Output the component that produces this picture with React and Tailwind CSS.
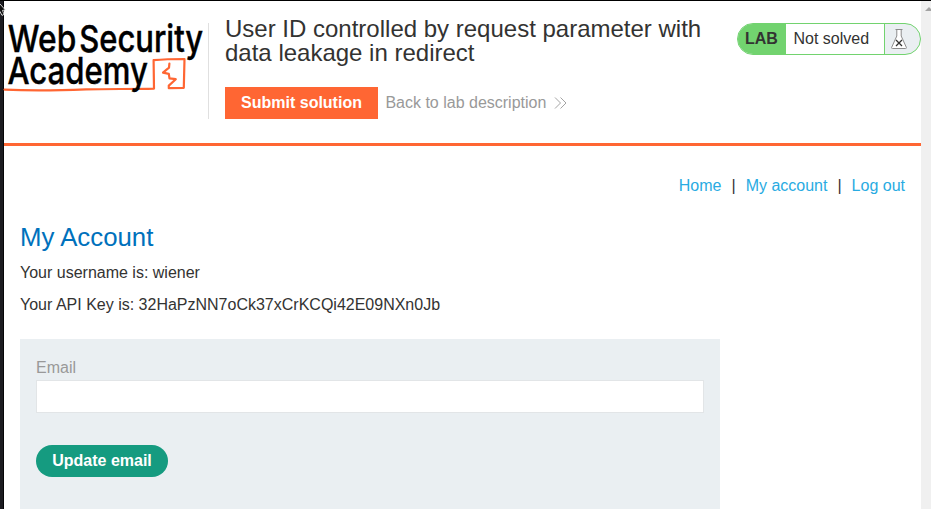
function Logo() {
  return (
    <svg width="204" height="96" viewBox="0 0 204 96" className="block shrink-0 overflow-visible" fontFamily="Inter, sans-serif" fontSize="37.2" fontWeight="500" stroke="#000" strokeWidth="0.4">
      <text x="3.8" y="50.7" textLength="68.5" lengthAdjust="spacingAndGlyphs">Web</text>
      <text x="75.2" y="50.7" textLength="124" lengthAdjust="spacingAndGlyphs">Security</text>
      <g fill="none" stroke="#ff6633" strokeWidth="2.2" strokeLinejoin="round" strokeLinecap="round">
        <path d="M.5 88.6C30 90 55 89.4 82 88.4C105 87.8 128 88.2 150 87.6L149.6 59.2C160 58.2 171 58 180.5 58L179.8 86.8L164.8 87.2L164.8 84.6L171.8 78.2L165.5 77.4L164.8 72.8L159 71.7L165 66.7L165.4 62.7" />
      </g>
      <text x="3.4" y="83.2" textLength="140.5" lengthAdjust="spacingAndGlyphs">Academy</text>
    </svg>
  );
}

function Flask() {
  return (
    <svg width="18" height="22" viewBox="0 0 18 22" fill="none" className="block">
      <path d="M5.5 1.5H12.5M6.8 1.5V8L1.6 19.5Q1.4 20.5 2.4 20.5H15.6Q16.6 20.5 16.4 19.5L11.2 8V1.5" fill="#fff" stroke="#8c8c8c" />
      <path d="M6 12L12 18M12 12L6 18" stroke="#333332" strokeWidth="1.3" />
    </svg>
  );
}

function LabStatus() {
  return (
    <div className="mt-[22px] flex h-8 w-[184px] shrink-0 overflow-hidden rounded-full border border-[#72d36f] bg-[#eaeff2]">
      <div className="flex w-12 items-center bg-[#72d36f] pl-[7px] font-bold">LAB</div>
      <div className="flex w-[99px] items-center border-r border-[#72d36f] bg-white pl-[7.5px] pb-px">Not solved</div>
      <div className="pt-1 pl-[5px]"><Flask /></div>
    </div>
  );
}

export default function App() {
  return (
    <div className="relative flex h-[509px] w-[931px] overflow-hidden border-t border-black bg-white font-['Liberation_Sans',Arial,sans-serif] text-base leading-6 text-[#333332]">
      <div className="w-1 shrink-0 border-r border-[#050507] bg-[#1c1c21]" />
      <div className="flex w-[917px] shrink-0 flex-col">
        <header className="flex h-[145px] shrink-0 border-b-3 border-[#ff6633]">
          <Logo />
          <div className="mt-[22px] h-24 w-px shrink-0 bg-[#e0e0e0]" />
          <div className="flex w-[528px] shrink-0 flex-col pt-4 pl-4">
            <h2 className="w-[490px] text-2xl leading-6">User ID controlled by request parameter with data leakage in redirect</h2>
            <div className="mt-[22px] flex h-8 items-center">
              <button className="h-8 w-[153px] bg-[#ff6633] pb-px font-bold text-white">Submit solution</button>
              <a className="ml-[7.4px] flex items-center text-[#999]">
                <span className="pb-px">Back to lab description</span>
                <svg width="13" height="12" viewBox="0 0 13 12" fill="none" stroke="#999" strokeWidth="0.9" className="ml-2">
                  <path d="M1 .5L6.5 6L1 11.5M6.5 .5L12 6L6.5 11.5" />
                </svg>
              </a>
            </div>
          </div>
          <LabStatus />
        </header>
        <main className="flex flex-1 flex-col px-4">
          <nav className="mt-7 flex h-6 justify-end text-[#29abe2]">
            <a>Home</a>
            <span className="mx-[10px] text-[#333332]">|</span>
            <a>My account</a>
            <span className="mx-[10px] text-[#333332]">|</span>
            <a>Log out</a>
          </nav>
          <h1 className="mt-[23px] text-[25.8px] leading-8 text-[#0071bc]">My Account</h1>
          <p className="mt-2">Your username is: wiener</p>
          <p className="mt-2">Your API Key is: 32HaPzNN7oCk37xCrKCQi42E09NXn0Jb</p>
          <form className="mt-[22px] flex w-[700px] flex-1 flex-col items-start bg-[#eaeff2] px-4 pt-[17px]">
            <label className="text-[#999]">Email</label>
            <input aria-label="Email" className="h-[33px] w-[668px] border border-[#e2e5e7] bg-white px-2 outline-none" />
            <button type="button" className="mt-8 h-8 w-[132px] rounded-full bg-[#159b80] pb-px font-bold text-white">Update email</button>
          </form>
        </main>
      </div>
      <div className="flex w-[10px] shrink-0 justify-end bg-[#f0f0f0] pt-[6px]">
        <svg width="6" height="4" viewBox="0 0 6 4"><path d="M0 4L4 0L6 2V4Z" fill="#a3a3a3" /></svg>
      </div>
      <svg width="8" height="17" viewBox="0 0 8 17" className="absolute top-0 left-0">
        <path d="M-2 1L0 3L5.4 9L2.5 9.4L4 13.4L2 14.4L0 10.6L-2 13Z" fill="#111" stroke="#fff" strokeWidth="0.8" />
      </svg>
    </div>
  );
}
